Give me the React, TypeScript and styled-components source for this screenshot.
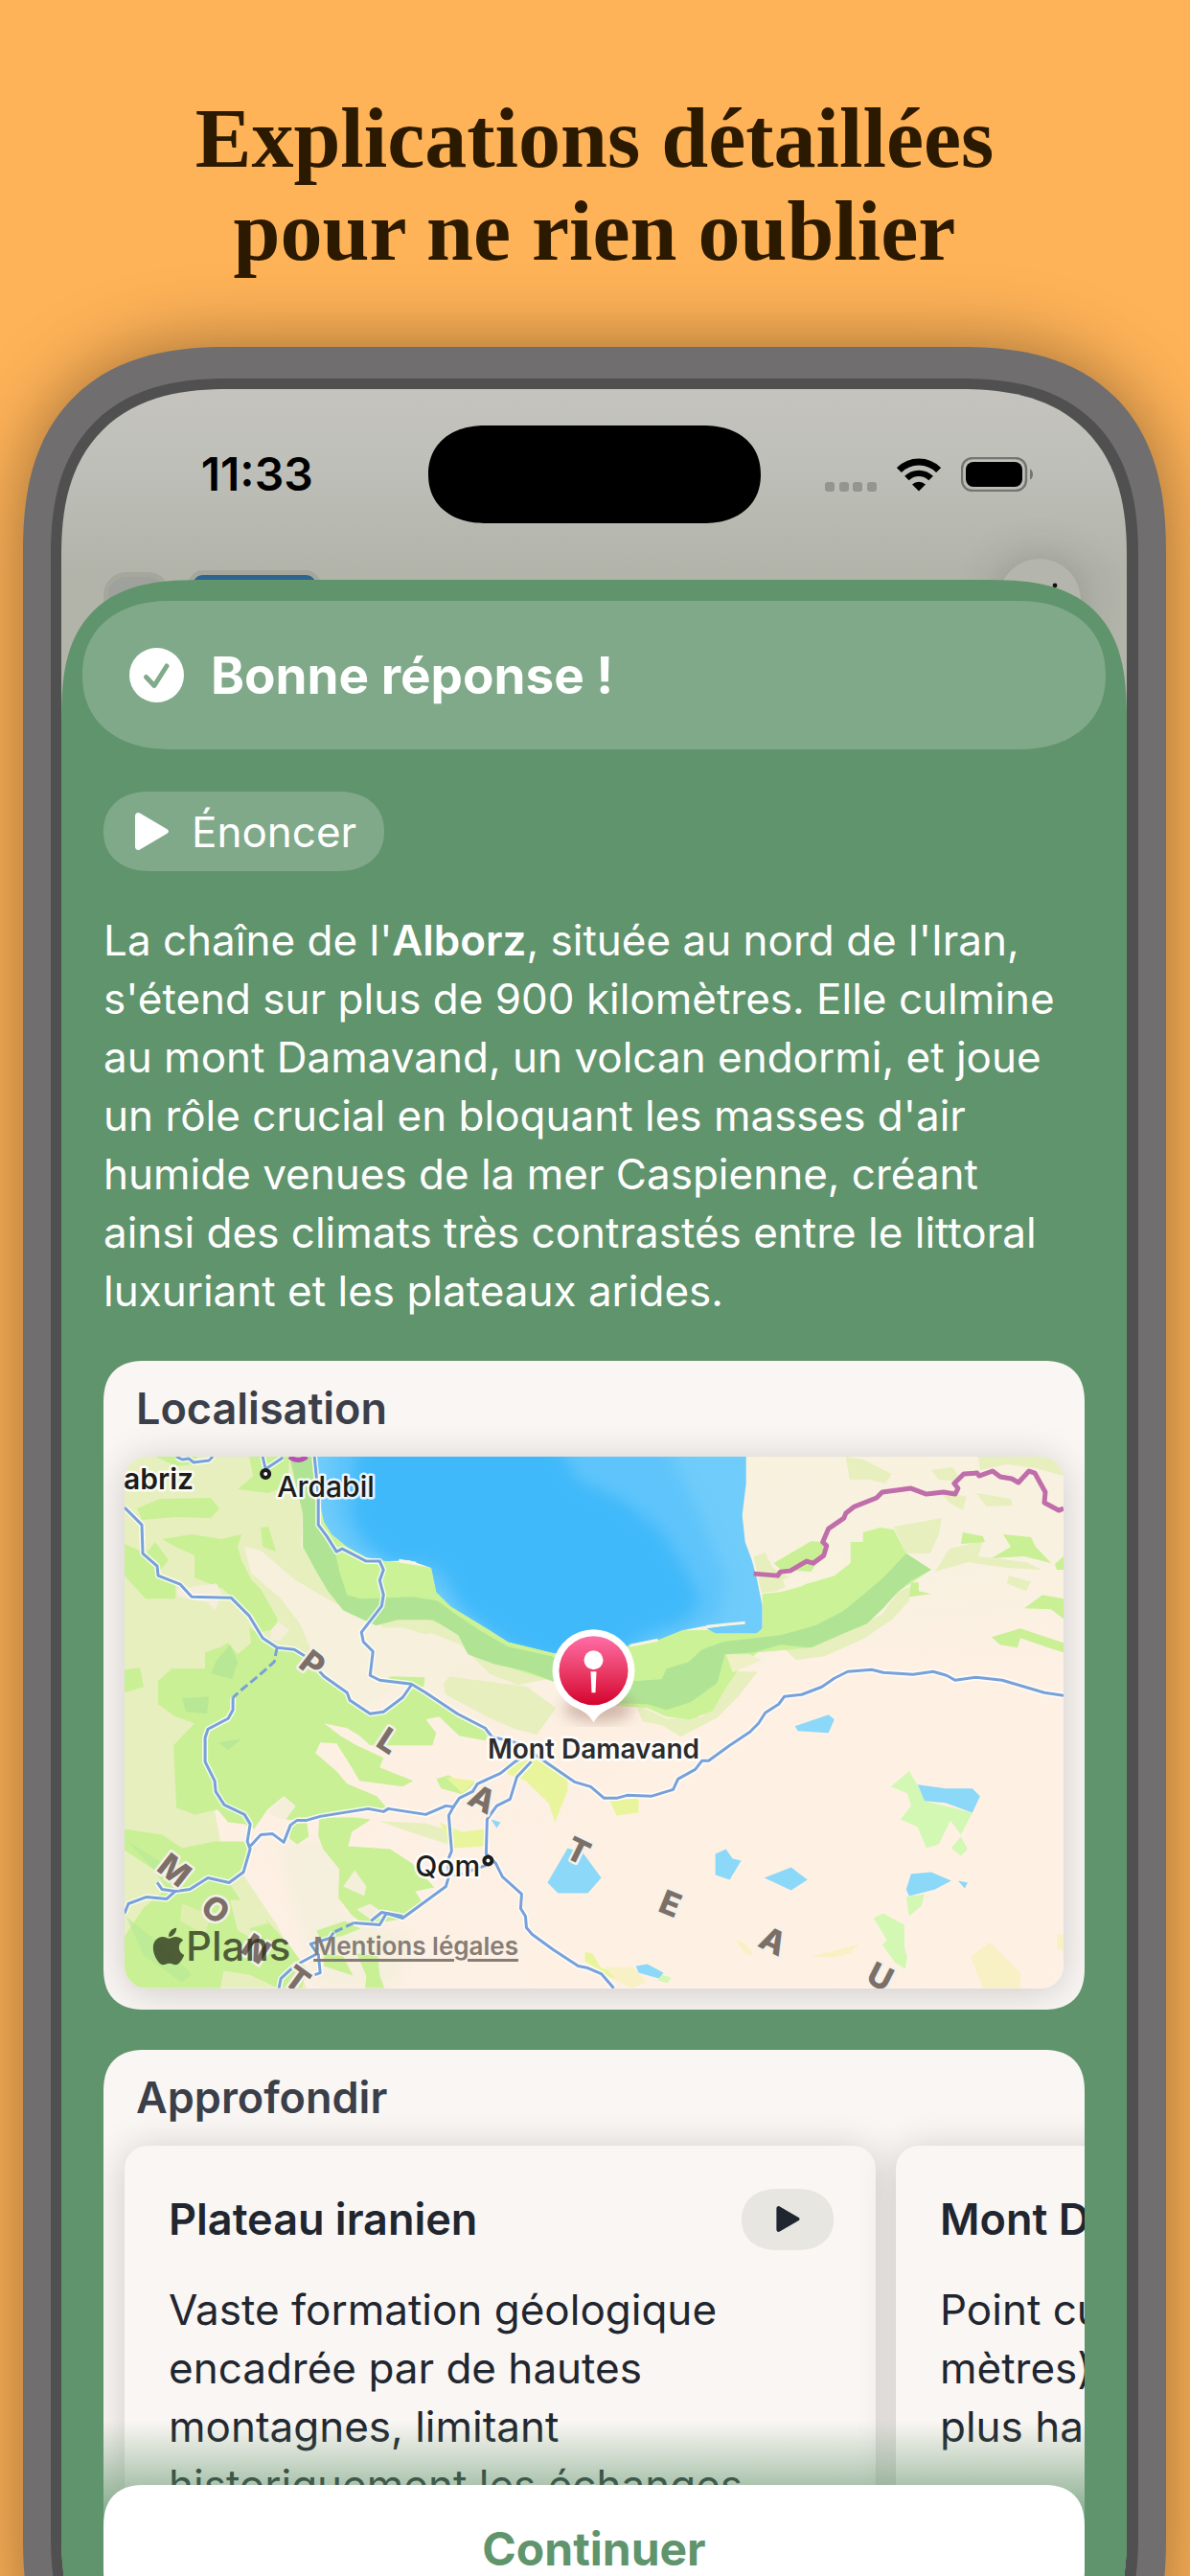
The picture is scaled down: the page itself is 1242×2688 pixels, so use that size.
import React from "react";
import styled, { createGlobalStyle, css } from "styled-components";
import { FaApple } from "react-icons/fa";

const color = {
  page: "#ffb358",
  heading: "#2b1a00",
  bezel: "#706e6f",
  ring: "#505050",
  sheet: "#60946c",
  sheetClear: "rgba(96, 148, 108, 0)",
  tint: "rgba(255, 255, 255, 0.2)",
  paper: "#faf6f3",
  ink: "#1f2630",
  inkSoft: "#3a3f49",
};

const sans = `Inter, "Liberation Sans", sans-serif`;

/* Rounded corners, with the softer continuous curve where the browser has it. */
const corners = (round: string, smooth: string, curve = 1.3) => css`
  border-radius: ${round};
  @supports (corner-shape: superellipse(1.3)) {
    border-radius: ${smooth};
    corner-shape: superellipse(${curve});
  }
`;

const GlobalStyle = createGlobalStyle`
  *, *::before, *::after { box-sizing: border-box; }
  body { margin: 0; background: ${color.page}; font-family: ${sans}; }
  h1, h2, h3, p { margin: 0; }
  button { border: 0; padding: 0; font: inherit; cursor: pointer; }
  svg { display: block; }
`;

const Page = styled.main`
  height: 100vh;
  overflow: hidden;
  padding: 96px 25px 0 24px;
  background: ${color.page};
`;

const Headline = styled.h1`
  padding-bottom: 72px;
  color: ${color.heading};
  font: 700 88px/97px "Liberation Serif", "Times New Roman", serif;
  text-align: center;
`;

const Phone = styled.section`
  ${corners("184px", "215px")}
  aspect-ratio: 1193 / 2501;
  padding: 33px 29px;
  background: ${color.bezel};
  box-shadow: 0 0 80px rgba(0, 0, 0, 0.4);
`;

const Ring = styled.div`
  ${corners("158px", "186px")}
  height: 100%;
  padding: 11px 12px 11px 11px;
  background: ${color.ring};
`;

const Screen = styled.div`
  ${corners("148px", "175px")}
  height: 100%;
  display: flex;
  flex-direction: column;
  overflow: hidden;
  background: linear-gradient(#c5c3be 0, #bfc0ba 70px, #b2b3a9 190px);
`;

const StatusBar = styled.header`
  flex: none;
  height: 177px;
  display: grid;
  grid-template-columns: 1fr auto 1fr;
  align-items: center;
`;

const Clock = styled.time`
  padding-left: 26px;
  font-size: 48px;
  font-weight: 600;
  text-align: center;
  color: #000;
`;

const Island = styled.div`
  ${corners("51px", "60px / 51px", 1.15)}
  width: 347px;
  height: 102px;
  background: #000;
`;

const Indicators = styled.div`
  display: flex;
  justify-content: center;
  align-items: flex-end;
  gap: 21px;
  padding-right: 30px;
`;

const Toolbar = styled.div`
  flex: none;
  height: 86px;
  display: flex;
  align-items: center;
  gap: 18px;
  padding: 0 48px 0 44px;
`;

const Pill = styled.div<{ $wide?: boolean; $fill: string }>`
  width: ${(p) => (p.$wide ? 139 : 70)}px;
  height: ${(p) => (p.$wide ? 62 : 58)}px;
  border: 5px solid #a5a79d;
  border-radius: ${(p) => (p.$wide ? 16 : 24)}px;
  background: ${(p) => p.$fill};
`;

const RoundTool = styled.div`
  width: 86px;
  height: 86px;
  margin-left: auto;
  border-radius: 50%;
  background: #b4b5ac;
  box-shadow: 0 0 44px rgba(60, 60, 50, 0.25);
`;

const Sheet = styled.section`
  ${corners("116px 116px 0 0", "150px 150px 0 0", 1.48)}
  position: relative;
  flex: 1;
  min-height: 0;
  margin-top: -64px;
  padding-top: 22px;
  overflow: hidden;
  background: ${color.sheet};
`;

const Banner = styled.header`
  ${corners("78px", "92px / 78px", 1.15)}
  height: 155px;
  display: flex;
  align-items: center;
  gap: 28px;
  margin: 0 22px;
  padding: 0 49px;
  background: ${color.tint};
  color: #fff;
`;

const BannerTitle = styled.h2`
  font-size: 53px;
  font-weight: 700;
`;

const Content = styled.div`
  display: flex;
  flex-direction: column;
  align-items: flex-start;
  gap: 42px;
  padding: 44px 44px 0;
`;

const SpeakButton = styled.button`
  ${corners("42px", "48px / 42px", 1.15)}
  height: 83px;
  display: flex;
  align-items: center;
  gap: 24px;
  padding: 0 29px 0 33px;
  background: ${color.tint};
  color: #fff;
  font-size: 44px;
`;

const Explanation = styled.p`
  padding-right: 16px;
  color: #fff;
  font-size: 44px;
  line-height: 61px;

  b {
    font-weight: 600;
  }
`;

const Card = styled.section`
  ${corners("36px", "44px")}
  width: 100%;
  overflow: hidden;
  background: ${color.paper};
`;

const CardTitle = styled.h2`
  height: 100px;
  padding: 0 34px;
  color: ${color.inkSoft};
  font-size: 45px;
  font-weight: 600;
  line-height: 100px;
`;

const lifted = css`
  box-shadow: 0 4px 40px rgba(0, 0, 0, 0.18);
`;

const MapFrame = styled.div`
  ${lifted}
  position: relative;
  margin: 0 22px 22px;
  border-radius: 24px;
  overflow: hidden;
`;

const MapCanvas = styled.svg`
  width: 100%;
  height: auto;
  font-family: ${sans};
`;

const Attribution = styled.div`
  position: absolute;
  left: 28px;
  bottom: 20px;
  display: flex;
  align-items: center;
  gap: 24px;
`;

const Brand = styled.span`
  display: flex;
  align-items: center;
  color: rgba(38, 44, 24, 0.75);
  font-size: 42px;
  font-weight: 500;
  line-height: 48px;

  svg {
    margin: 0 -4px;
  }
`;

const LegalLink = styled.a`
  color: #857d76;
  font-size: 26px;
  font-weight: 600;
  text-decoration: underline;
  text-decoration-thickness: 3px;
  text-underline-offset: 4px;
`;

const Carousel = styled.div`
  display: flex;
  gap: 21px;
  padding: 0 22px 22px;
`;

const Topic = styled.article`
  ${lifted}
  flex: 0 0 80%;
  padding: 45px 44px 44px 46px;
  border-radius: 24px;
  background: ${color.paper};
  color: ${color.ink};
`;

const TopicHead = styled.div`
  display: flex;
  justify-content: space-between;
  align-items: center;
  height: 64px;
  margin-bottom: 32px;
`;

const TopicTitle = styled.h3`
  font-size: 45px;
  font-weight: 600;
`;

const TopicText = styled.p`
  font-size: 44px;
  line-height: 61px;
`;

const PlayButton = styled.button`
  ${corners("32px", "38px / 32px", 1.15)}
  display: grid;
  place-items: center;
  width: 96px;
  height: 64px;
  background: #e7e6e1;
  color: ${color.ink};
`;

const Dock = styled.footer`
  position: absolute;
  left: 0;
  right: 0;
  bottom: 0;
  padding: 66px 44px 94px;
  background: linear-gradient(${color.sheetClear} 0, ${color.sheet} 130px);
`;

const ContinueButton = styled.button`
  ${corners("36px", "44px")}
  width: 100%;
  height: 132px;
  background: #fff;
  color: ${color.sheet};
  font-size: 48px;
  font-weight: 700;
`;

const PlayIcon = ({ width, height }: { width: number; height: number }) => (
  <svg width={width} height={height} viewBox="0 0 35 39" aria-hidden="true">
    <path
      d="M0 3.6C0 .8 2.6-.8 5 .6L33 16.9c2.6 1.5 2.6 3.7 0 5.2L5 38.4C2.6 39.8 0 38.2 0 35.4Z"
      fill="currentColor"
    />
  </svg>
);

const CheckIcon = () => (
  <svg width="57" height="57" viewBox="0 0 57 57" aria-hidden="true">
    <circle cx="28.5" cy="28.5" r="28.5" fill="#fff" />
    <path
      d="M17.500 30.500 26 39.500 39 19"
      fill="none"
      stroke="#80aa8a"
      strokeWidth="5"
      strokeLinecap="round"
      strokeLinejoin="round"
    />
  </svg>
);

const SignalIcon = () => (
  <svg width="54" height="10" viewBox="0 0 54 10" aria-hidden="true">
    {[0, 15, 29, 44].map((x) => (
      <rect key={x} x={x} width="10" height="10" rx="3" fill="#949590" />
    ))}
  </svg>
);

const WifiIcon = () => (
  <svg width="46" height="35" viewBox="0 0 46 35" aria-hidden="true">
    <g fill="none" stroke="#000">
      <path d="M2.4 12.6a29 29 0 0 1 41.2 0" strokeWidth="7" />
      <path d="M10.4 21.1a17.7 17.7 0 0 1 25.2 0" strokeWidth="6.4" />
    </g>
    <path d="M16 27.5a10 10 0 0 1 14 0L23 34.5Z" fill="#000" />
  </svg>
);

const BatteryIcon = () => (
  <svg width="76" height="36" viewBox="0 0 76 36" aria-hidden="true">
    <rect x="1" y="1" width="67" height="34" rx="11" fill="none" stroke="#74756f" strokeWidth="2.4" />
    <rect x="5" y="5" width="59" height="26" rx="8" fill="#000" />
    <path d="M72 12.500c4 1.600 4 9.400 0 11Z" fill="#74756f" />
  </svg>
);

const pale = [
  "0,0 190,0 186,60 184,94 201,108 212,140 228,160 262,172 240,165 211,148 177,128 142,98 125,94 132,121 163,148 183,174 211,200 190,225 120,260 80,300 100,400 160,490 190,554 0,554",
  "330,228 360,232 420,240 450,262 430,290 407,284 380,272 335,248",
  "262,170 300,164 345,168 362,206 420,224 440,232 410,238 380,226 362,208 350,196 320,184 280,190",
  "533,258 565,273 603,271 613,242 633,224 660,224 640,250 618,272 580,292 560,280 540,276",
  "684,196 716,199 752,183 790,164 806,141 820,135 818,150 800,170 770,190 730,208 700,212",
  "752,0 770,3 800,18 793,28 777,24 756,24",
  "841,14 863,11 874,26 849,24",
  "890,0 979,0 979,20 950,12 920,8 892,14",
  "888,38 924,44 926,51 899,52",
  "848,34 878,42 874,56 860,48",
  "802,73 852,64 849,81 840,101 815,101",
  "656,104 668,100 676,116 700,130 680,140 664,142",
  "860,96 895,88 890,104 940,110 956,118 920,116 880,110 845,120",
  "922,124 945,130 940,140 920,132",
  "266,380 314,382 342,391 344,406 300,392",
];

const green = [
  "37,44 90,43 99,54 90,64 53,63 18,66 13,54",
  "39,86 70,81 101,86 122,81 118,94 122,108 132,128 142,138 159,168 159,179 142,183 128,164 111,146 103,138 73,126 73,103 53,94",
  "0,91 22,101 32,89 46,108 35,121 53,131 53,148 22,148 0,124",
  "142,74 150,73 158,99 144,94",
  "32,0 76,0 70,8 54,10",
  "130,0 172,0 170,30 150,38 118,34 134,20",
  "84,204 101,198 108,194 118,206 132,194 130,178 149,191 163,201 180,201 197,214 211,231 232,249 252,266 266,266 280,258 301,236 314,244 349,268 380,288 376,296 349,291 328,271 314,274 325,288 321,301 256,301 245,291 232,283 208,278 225,291 242,301 270,314 266,324 301,338 290,344 245,338 235,321 221,299 204,298 199,309 221,328 232,341 263,354 273,366 221,373 177,379 168,378 178,364 166,354 149,368 135,388 125,383 108,381 97,368 73,373 54,366 51,301 73,278 53,271 35,258 35,234 49,221 84,221",
  "264,236 278,229 313,230 312,240 296,238",
  "0,222 16,220 20,240 0,246",
  "325,336 338,332 352,342 366,340 352,352 330,346",
  "0,388 39,394 60,408 94,401 125,401 132,414 121,431 108,443 125,468 149,484 173,511 190,534 185,554 160,554 130,540 103,536 100,554 0,554 0,500 20,470 44,450 30,430 0,410",
  "172,384 190,380 192,396 180,404 172,398",
  "203,376 240,376 257,378 237,391 233,406 277,409 300,424 323,449 303,453 310,464 290,482 250,488 237,478 223,460 224,430 207,409 202,395",
  "200,494 230,484 246,492 226,500 204,502",
  "208,518 228,521 238,541 208,531",
  "242,518 264,521 266,541 271,554 251,554 252,541",
  "874,79 895,83 897,89 872,91",
  "916,81 945,84 950,94 966,111 938,104 904,106 924,94",
  "979,148 957,144 938,158 966,159 979,169",
  "904,188 934,179 979,194 979,204 963,199 934,189 931,199 913,196",
  "820,131 828,131 828,140 841,143 818,146",
  "970,112 979,104 979,118 972,118",
  "677,111 716,88 734,90 738,104 716,120 684,118",
];

const mint = [
  "818,328 827,343 834,359 884,371 872,394 861,379 849,404 836,408 827,386 809,378 820,364 816,351 799,344",
  "872,396 879,409 872,416 862,408",
  "815,459 834,456 831,468 818,479",
  "781,481 791,476 813,488 813,511 816,521 814,534 804,528 790,509 795,504",
  "560,540 570,543 566,549 556,546",
];

const yellow = [
  "328,381 352,391 375,388 375,406 344,408",
  "335,334 366,338 352,351",
  "397,321 435,314 462,334 462,348 449,381 442,361 418,338 400,331",
  "506,359 536,356 536,371 513,374",
  "480,516 488,518 496,532 515,540 524,550 505,542 480,526",
];

const straw = [
  "882,521 902,506 934,538 934,554 895,554",
  "716,521 766,508 756,518 740,522",
  "637,504 646,506 656,519 648,519",
  "500,532 530,532 544,548 530,554 515,548",
  "972,498 979,498 979,516 972,512",
];

const lakes = [
  "699,281 734,269 740,274 734,288 702,286",
  "827,342 856,346 884,346 892,354 884,371 856,361 834,359",
  "616,414 627,409 634,419 643,421 631,441 616,436",
  "667,439 695,428 712,441 695,452",
  "820,435 841,433 862,442 845,451 818,458 815,451",
  "869,442 879,444 876,450",
  "533,531 545,529 562,538 557,544 536,538",
  "462,408 478,413 497,439 483,455 452,455 441,444",
  "382,378 392,381 388,387",
];

const roads = [
  "0,53 18,71 19,101 34,114 35,124 58,133 70,146 111,147 130,166 144,189 159,199 177,201 190,209 208,229 232,246 235,254 256,268 270,266 290,251 299,238",
  "113,251 113,264 108,273 87,284 84,293 84,318 94,338 95,349 104,363 125,373 131,383 128,401 131,409 124,433 109,444 87,439 68,451 53,453 39,451 34,444",
  "53,453 44,461 23,459 4,466 0,476",
  "131,406 142,394 154,393 166,402 173,384 180,379 190,379 204,375 254,367 270,370 275,367 314,373 335,364 343,365 349,356 363,349 368,341 392,330 407,318 428,306",
  "144,0 147,13 165,1",
  "198,0 202,41 202,71 211,83 221,99 227,96 252,109 266,109 270,118 266,129 270,144 268,156 247,183 249,193 259,203 256,228 266,233 299,237 314,246 347,268 376,283 383,292 411,299 440,319 469,339 486,344 500,356 513,356 524,353 549,354 572,347 577,336 595,326 602,317 609,317 631,301 652,287 661,278 668,267 682,258 688,250 706,248 727,240 740,231 754,224 779,222 791,225 822,227 843,224 857,228 866,233 888,230 915,233 959,246 979,249",
  "424,318 409,334 402,357 388,364 378,378 377,414 387,424 394,438 414,456 413,471 418,479 419,491 425,498 447,514 473,531 483,533 497,539 510,554",
  "343,365 338,374 341,411 337,421 338,438 335,448 290,481 273,476 266,488 239,486",
  "257,484 268,475 290,479",
  "218,496 214,502 194,508 201,518 177,531 163,544 161,554",
  "202,518 204,538 190,543",
  "54,0 60,3 67,2 72,6 88,4 92,0",
];

const dashedRoads = ["159,199 156,214 139,229 122,243 113,251", "239,486 218,496", "377,426 342,438"];

const frontier =
  "656,122 681,124 684,120 694,119 711,109 718,111 729,103 732,93 728,89 734,75 750,64 752,59 761,52 784,43 790,37 820,33 836,39 854,37 866,39 869,33 865,28 875,18 889,17 891,20 905,15 913,21 925,23 932,27 943,15 949,17 960,37 959,48 974,56 979,54";

const regionLetters: Array<[string, number, number, number]> = [
  ["P", 196, 216, 38],
  ["L", 275, 296, 33],
  ["A", 373, 357, 28],
  ["T", 473, 411, 26],
  ["E", 569, 466, 22],
  ["A", 676, 505, 26],
  ["U", 788, 542, 27],
  ["M", 52, 431, 38],
  ["O", 95, 472, 38],
  ["N", 137, 513, 34],
  ["T", 180, 545, 36],
];

const Shapes = ({ list, fill }: { list: string[]; fill: string }) => (
  <g fill={fill}>
    {list.map((points) => (
      <polygon key={points} points={points} />
    ))}
  </g>
);

const LocationMap = () => (
  <MapCanvas viewBox="0 0 979 554" role="img" aria-label="Mont Damavand">
    <defs>
      <linearGradient id="land" x1="0" y1="0" x2="0.25" y2="1">
        <stop offset="0" stopColor="#f8f2dd" />
        <stop offset="0.38" stopColor="#f8f1e0" />
        <stop offset="0.6" stopColor="#fdf0e3" />
        <stop offset="1" stopColor="#fdf0e4" />
      </linearGradient>
      <linearGradient id="pin" x1="0" y1="0" x2="0" y2="1">
        <stop offset="0" stopColor="#ff6da6" />
        <stop offset="0.5" stopColor="#ea3d68" />
        <stop offset="1" stopColor="#d5032e" />
      </linearGradient>
      <filter id="soft" x="-20%" y="-20%" width="140%" height="140%">
        <feGaussianBlur stdDeviation="8" />
      </filter>
      <clipPath id="sea-edge">
        <polygon points="200,0 202,41 208,68 216,81 232,94 252,105 273,109 297,108 320,116 325,141 340,156 373,176 400,193 445,204 489,212 527,196 556,191 581,181 607,176 647,173 607,179 616,184 659,184 665,179 665,156 659,126 654,108 647,89 644,61 648,28 648,0" />
      </clipPath>
    </defs>

    <rect width="979" height="554" fill="url(#land)" />
    <g filter="url(#soft)">
      <polygon points="560,300 700,200 979,215 979,554 420,554 440,400" fill="#fef1e4" />
      <polygon points="250,200 330,190 420,240 400,290 300,230" fill="#f7efdc" />
      <polygon points="160,400 230,400 230,480 300,500 280,554 200,554 180,480" fill="#f5efdd" />
    </g>
    <Shapes list={pale} fill="#e7efbf" />
    <polygon
      points="125,94 142,98 177,128 211,148 245,166 262,178 290,178 330,190 350,215 330,240 290,235 250,262 215,230 197,208 183,174 163,148 132,121"
      fill="#f6f0dc"
    />
    <Shapes list={green} fill="#c9f095" />
    <g fill="#b8e896">
      <polygon points="96,212 110,196 118,214 112,232 90,226" />
      <polygon points="60,252 88,250 86,268 64,266" />
      <polygon points="98,298 122,294 108,306" />
      <polygon points="2,400 40,424 70,436 60,446 30,430" opacity="0.6" />
      <polygon points="2,480 40,510 70,540 60,548 20,520" opacity="0.6" />
    </g>
    <g fill="#f4eedb">
      <polygon points="54,138 96,132 101,142 95,160 86,152 56,146" />
      <polygon points="153,180 160,172 172,180 162,192 152,190" />
      <polygon points="150,370 166,355 178,365 168,378 158,376" />
      <polygon points="228,448 240,431 252,448 250,458" />
      <polygon points="242,472 256,466 268,474 256,482" />
      <polygon points="110,462 124,462 150,486 130,492 140,506 118,494" fill="#e7efbf" />
      <polygon points="60,466 90,478 84,498 58,484" fill="#e0efb0" />
    </g>

    <polygon
      points="172,0 200,0 202,41 216,81 252,105 320,116 325,141 373,176 445,204 527,196 581,181 665,180 665,143 684,141 706,135 727,124 757,111 757,89 770,89 770,79 788,74 802,76 815,101 841,118 806,141 774,174 716,199 660,204 640,222 627,241 613,265 590,274 565,271 545,262 489,258 452,236 420,226 385,214 360,205 352,184 305,165 262,172 245,168 228,160 212,140 199,118 186,94 186,60"
      fill="#cbf297"
    />
    <polygon
      points="172,0 198,0 200,41 204,70 218,92 224,120 232,144 246,148 300,146 326,150 345,164 372,182 400,198 445,208 489,234 531,234 560,232 565,221 588,214 602,201 624,193 684,186 720,176 749,161 770,144 791,126 815,101 841,118 820,129 806,141 791,158 774,174 752,183 716,199 684,196 656,204 626,206 618,236 604,246 590,256 565,264 545,258 489,256 452,236 420,224 385,216 358,206 348,186 322,170 285,170 262,176 245,168 228,160 212,140 199,118 186,94 186,60"
      fill="#b0e494"
    />
    <polygon points="734,90 757,111 740,124 720,130 690,138 686,128 716,120" fill="#f8f2de" />
    <polygon points="627,206 652,206 664,212 634,225" fill="#eff0c6" />

    <g clipPath="url(#sea-edge)">
      <rect width="979" height="240" fill="#70ccfa" />
      <polygon
        points="214,-20 560,-20 600,60 628,130 620,170 560,190 489,230 400,200 310,126 280,112 238,96 218,60"
        fill="#5fc4fb"
        filter="url(#soft)"
      />
      <polygon
        points="242,-20 448,-20 472,24 520,46 560,78 586,120 600,150 586,170 540,186 489,220 445,212 400,196 352,158 335,126 318,112 280,112 250,88 236,60"
        fill="#3fb9fa"
        filter="url(#soft)"
      />
    </g>
    <path d="M527 197 556 191M607 177 647 173M286 108 304 111" stroke="#f6f3e0" strokeWidth="3" fill="none" />

    <Shapes list={mint} fill="#d2f8b3" />
    <Shapes list={yellow} fill="#e9f59d" />
    <Shapes list={straw} fill="#f8f1c5" />
    <Shapes list={lakes} fill="#8bd8f9" />

    <g fill="none" strokeLinejoin="round">
      {roads.map((points) => (
        <polyline key={points} points={points} stroke="#fff" strokeOpacity="0.8" strokeWidth="6" />
      ))}
      {roads.map((points) => (
        <polyline key={points} points={points} stroke="#77a1d8" strokeWidth="3" />
      ))}
      {dashedRoads.map((points) => (
        <polyline key={points} points={points} stroke="#77a1d8" strokeWidth="3" strokeDasharray="9 4" />
      ))}
      <polyline points={frontier} stroke="#c06dab" strokeWidth="5" />
      <path d="M172 0Q181 7 190 0" stroke="#b84fb5" strokeWidth="5" />
    </g>

    <g
      fill="#7c6f67"
      stroke="#f4f1ea"
      strokeWidth="5"
      strokeLinejoin="round"
      paintOrder="stroke"
      fontSize="34"
      fontWeight="800"
      textAnchor="middle"
    >
      {regionLetters.map(([letter, x, y, angle]) => (
        <text key={`${letter}${x}`} transform={`translate(${x} ${y}) rotate(${angle})`} y="12">
          {letter}
        </text>
      ))}
    </g>

    <g fill="#fff" stroke="#1c1c1c" strokeWidth="4">
      <circle cx="147" cy="18" r="4" />
      <circle cx="379" cy="421" r="4" />
    </g>

    <g fill="#1c1c1c" stroke="#fff" strokeOpacity="0.85" strokeWidth="5" strokeLinejoin="round" paintOrder="stroke">
      <text x="72" y="34" fontSize="30" fontWeight="600" textAnchor="end">
        abriz
      </text>
      <text x="159" y="42" fontSize="30" fontWeight="500">
        Ardabil
      </text>
      <text x="303" y="438" fontSize="30" fontWeight="500">
        Qom
      </text>
      <text x="489" y="315" fontSize="28" fontWeight="600" textAnchor="middle" fill="#2c2c2e">
        Mont Damavand
      </text>
    </g>

    <ellipse cx="494" cy="262" rx="36" ry="14" fill="#8a5a50" opacity="0.4" filter="url(#soft)" />
    <path
      d="M489 180a43 43 0 0 1 18 82c-9 4-13 7-18 15-5-8-9-11-18-15a43 43 0 0 1 18-82Z"
      fill="#fff"
    />
    <circle cx="489" cy="223" r="36" fill="url(#pin)" />
    <circle cx="489" cy="212" r="10" fill="#fff" />
    <path d="M486 224H492L491 246H487Z" fill="#fff" />
  </MapCanvas>
);

export default function App() {
  return (
    <>
      <GlobalStyle />
      <Page>
        <Headline>
          Explications détaillées
          <br />
          pour ne rien oublier
        </Headline>
        <Phone>
          <Ring>
            <Screen>
              <StatusBar>
                <Clock>11:33</Clock>
                <Island />
                <Indicators>
                  <SignalIcon />
                  <WifiIcon />
                  <BatteryIcon />
                </Indicators>
              </StatusBar>
              <Toolbar aria-hidden="true">
                <Pill $fill="#9fa19d" />
                <Pill $wide $fill="#2d6590" />
                <RoundTool>
                  <svg width="86" height="86" viewBox="0 0 86 86">
                    <circle cx="59" cy="28" r="2.4" fill="#111" />
                  </svg>
                </RoundTool>
              </Toolbar>

              <Sheet>
                <Banner>
                  <CheckIcon />
                  <BannerTitle>Bonne réponse !</BannerTitle>
                </Banner>
                <Content>
                  <SpeakButton type="button">
                    <PlayIcon width={35} height={39} />
                    Énoncer
                  </SpeakButton>
                  <Explanation>
                    La chaîne de l'<b>Alborz</b>, située au nord de l'Iran, s'étend sur plus de 900 kilomètres. Elle
                    culmine au mont Damavand, un volcan endormi, et joue un rôle crucial en bloquant les masses d'air
                    humide venues de la mer Caspienne, créant ainsi des climats très contrastés entre le littoral
                    luxuriant et les plateaux arides.
                  </Explanation>
                  <Card>
                    <CardTitle>Localisation</CardTitle>
                    <MapFrame>
                      <LocationMap />
                      <Attribution>
                        <Brand>
                          <FaApple size={44} aria-hidden="true" />
                          Plans
                        </Brand>
                        <LegalLink href="#mentions">Mentions légales</LegalLink>
                      </Attribution>
                    </MapFrame>
                  </Card>
                  <Card>
                    <CardTitle>Approfondir</CardTitle>
                    <Carousel>
                      <Topic>
                        <TopicHead>
                          <TopicTitle>Plateau iranien</TopicTitle>
                          <PlayButton type="button" aria-label="Énoncer Plateau iranien">
                            <PlayIcon width={25} height={27} />
                          </PlayButton>
                        </TopicHead>
                        <TopicText>
                          Vaste formation géologique encadrée par de hautes montagnes, limitant historiquement les
                          échanges
                        </TopicText>
                      </Topic>
                      <Topic>
                        <TopicHead>
                          <TopicTitle>Mont Damavand</TopicTitle>
                          <PlayButton type="button" aria-label="Énoncer Mont Damavand">
                            <PlayIcon width={25} height={27} />
                          </PlayButton>
                        </TopicHead>
                        <TopicText>
                          Point culminant (5 610
                          <br />
                          mètres), volcan le
                          <br />
                          plus haut d'Asie
                        </TopicText>
                      </Topic>
                    </Carousel>
                  </Card>
                </Content>
                <Dock>
                  <ContinueButton type="button">Continuer</ContinueButton>
                </Dock>
              </Sheet>
            </Screen>
          </Ring>
        </Phone>
      </Page>
    </>
  );
}
